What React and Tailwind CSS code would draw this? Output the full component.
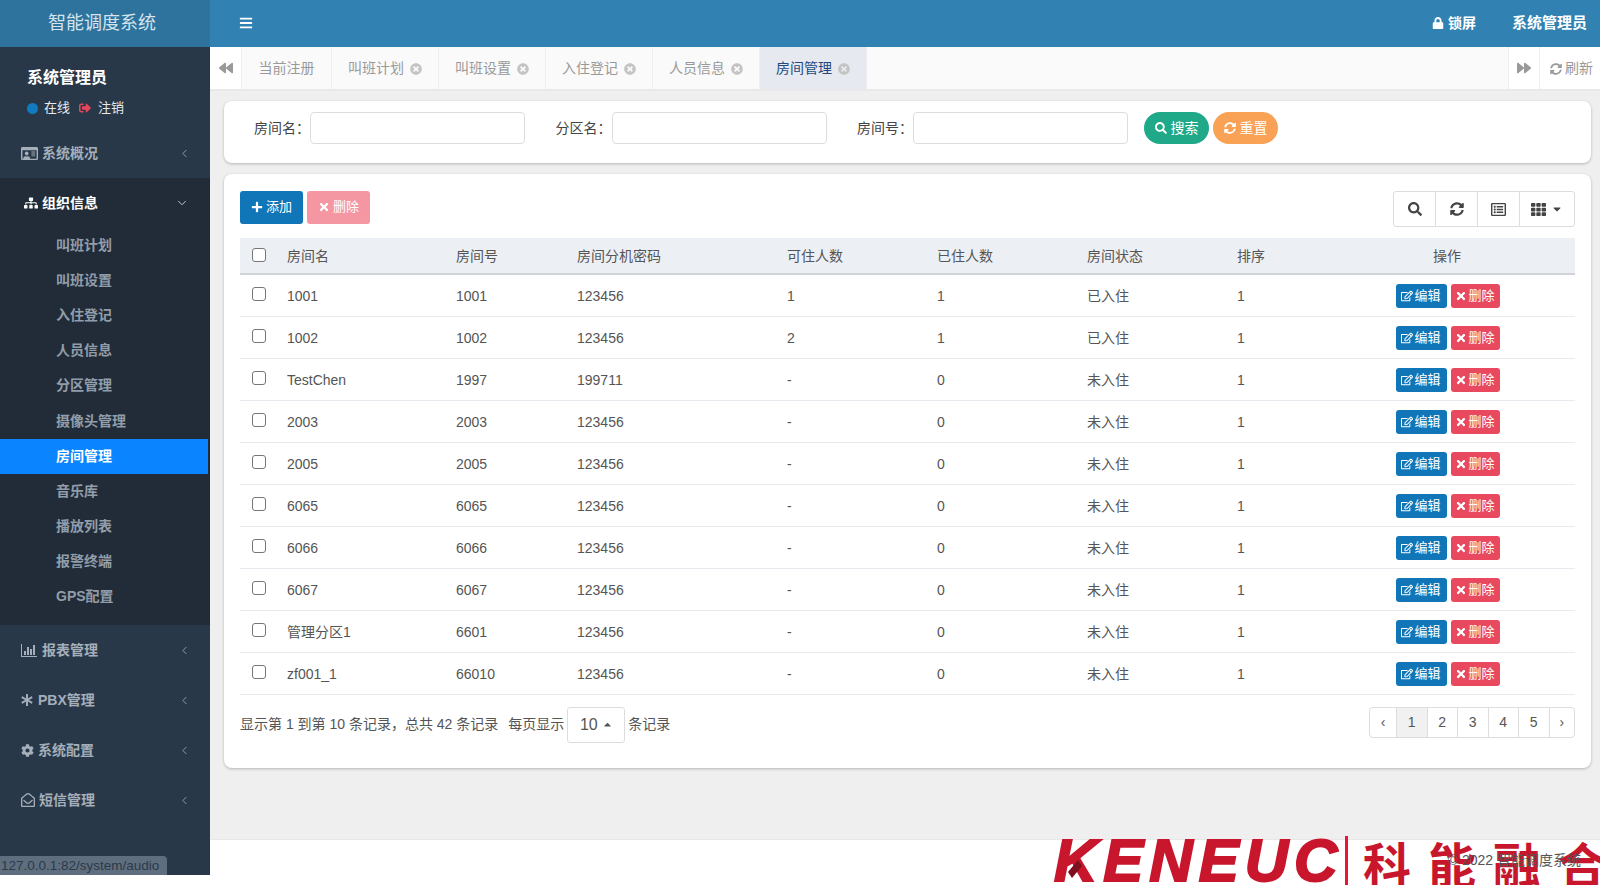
import {
  FaAsterisk,
  FaBackward,
  FaBars,
  FaCaretDown,
  FaCaretUp,
  FaCog,
  FaForward,
  FaLock,
  FaPlus,
  FaRegEdit,
  FaRegEnvelopeOpen,
  FaRegIdCard,
  FaRegListAlt,
  FaSearch,
  FaSignOutAlt,
  FaSitemap,
  FaSyncAlt,
  FaTh,
  FaTimes,
  FaTimesCircle,
} from "react-icons/fa";
import { ChevronDown, ChevronLeft } from "lucide-react";

const SUB_MENU = [
  "叫班计划",
  "叫班设置",
  "入住登记",
  "人员信息",
  "分区管理",
  "摄像头管理",
  "房间管理",
  "音乐库",
  "播放列表",
  "报警终端",
  "GPS配置",
];

const TABS = ["叫班计划", "叫班设置", "入住登记", "人员信息", "房间管理"];

const ROOMS = [
  { name: "1001", no: "1001", pwd: "123456", cap: "1", used: "1", status: "已入住" },
  { name: "1002", no: "1002", pwd: "123456", cap: "2", used: "1", status: "已入住" },
  { name: "TestChen", no: "1997", pwd: "199711", cap: "-", used: "0", status: "未入住" },
  { name: "2003", no: "2003", pwd: "123456", cap: "-", used: "0", status: "未入住" },
  { name: "2005", no: "2005", pwd: "123456", cap: "-", used: "0", status: "未入住" },
  { name: "6065", no: "6065", pwd: "123456", cap: "-", used: "0", status: "未入住" },
  { name: "6066", no: "6066", pwd: "123456", cap: "-", used: "0", status: "未入住" },
  { name: "6067", no: "6067", pwd: "123456", cap: "-", used: "0", status: "未入住" },
  { name: "管理分区1", no: "6601", pwd: "123456", cap: "-", used: "0", status: "未入住" },
  { name: "zf001_1", no: "66010", pwd: "123456", cap: "-", used: "0", status: "未入住" },
];

const ChartIcon = () => (
  <svg width="16" height="13" viewBox="0 0 16 13" fill="currentColor">
    <path d="M0 0h1v12h15v1H0z" />
    <path d="M3 7h2v4H3zM6 3h2v8H6zM9 5h2v6H9zM12 1h2v10h-2z" />
  </svg>
);

const Checkbox = () => (
  <span className="block w-[14px] h-[14px] rounded-[3px] border border-[#767676] bg-white" />
);

const MenuItem = ({ icon, label, gap = "gap-[4px]" }) => (
  <div className="h-[50px] flex items-center pl-[21px] pr-[19px] text-[14px] font-semibold text-[#a4afba]">
    <span className={`flex items-center ${gap}`}>
      {icon}
      {label}
    </span>
    <ChevronLeft size={13} strokeWidth={1.5} className="ml-auto text-[#a4afba]" />
  </div>
);

const Sidebar = () => (
  <aside className="w-[210px] h-[875px] shrink-0 bg-[#293849] flex flex-col">
    <div className="h-[47px] shrink-0 bg-[#2d739d] text-[#d5e4ee] text-[18px] flex items-center pl-[48px]">
      智能调度系统
    </div>
    <div className="h-[81px] shrink-0 pl-[27px] pt-[20px]">
      <div className="text-[16px] leading-[22px] font-bold text-white">系统管理员</div>
      <div className="mt-[9px] flex items-center text-[13px] leading-[20px] text-[#e6eaee]">
        <span className="w-[11px] h-[11px] rounded-full bg-[#127bc0]" />
        <span className="ml-[6px]">在线</span>
        <FaSignOutAlt className="ml-[9px] text-[12px] text-[#e5475c]" />
        <span className="ml-[7px]">注销</span>
      </div>
    </div>
    <MenuItem icon={<FaRegIdCard className="text-[17px]" />} label="系统概况" />
    <div className="bg-[#212c38] pb-[11px]">
      <div className="h-[50px] flex items-center pl-[24px] pr-[21px] text-[14px] font-bold text-white">
        <FaSitemap className="text-[14px] mr-[4px]" />
        组织信息
        <ChevronDown size={14} strokeWidth={1.5} className="ml-auto text-[#d4dae0]" />
      </div>
      {SUB_MENU.map((item) => (
        <div
          key={item}
          className={`h-[35.1px] w-[208px] flex items-center pl-[56px] text-[14px] font-semibold ${
            item === "房间管理" ? "bg-[#0a84ff] text-white" : "text-[#929daa]"
          }`}
        >
          {item}
        </div>
      ))}
    </div>
    <MenuItem icon={<ChartIcon />} label="报表管理" gap="gap-[5px]" />
    <MenuItem icon={<FaAsterisk className="text-[12px]" />} label="PBX管理" gap="gap-[5px]" />
    <MenuItem icon={<FaCog className="text-[13px]" />} label="系统配置" />
    <MenuItem icon={<FaRegEnvelopeOpen className="text-[14px]" />} label="短信管理" />
  </aside>
);

const TopBar = () => (
  <header className="h-[47px] shrink-0 bg-[#3182b2] flex items-center text-white pb-[1px]">
    <FaBars className="ml-[29px] text-[14px]" />
    <FaLock className="ml-auto text-[12px]" />
    <span className="ml-[4px] text-[14px] font-semibold">锁屏</span>
    <span className="ml-[36px] mr-[13px] text-[15px] font-semibold">系统管理员</span>
  </header>
);

const TabBar = () => (
  <div className="h-[44px] shrink-0 bg-[#fafafa] border-b-2 border-[#e9e9e9] flex text-[14px] text-[#999999]">
    <div className="w-[32px] bg-white border-r border-[#eeeeee] flex items-center justify-center">
      <FaBackward className="text-[14px] text-[#999999]" />
    </div>
    <div className="w-[90px] pt-[1px] border-r border-[#eeeeee] flex items-center justify-center">当前注册</div>
    {TABS.map((tab) => (
      <div
        key={tab}
        className={`w-[107px] pt-[1px] border-r border-[#eeeeee] flex items-center justify-center gap-[6px] ${
          tab === "房间管理" ? "bg-[#e6eaf0] text-[#22497f]" : ""
        }`}
      >
        {tab}
        <FaTimesCircle className="text-[12px] text-[#c4c4c4]" />
      </div>
    ))}
    <div className="ml-auto w-[32px] bg-white border-x border-[#eeeeee] flex items-center justify-center">
      <FaForward className="text-[14px] text-[#999999]" />
    </div>
    <div className="w-[60px] pt-[1px] bg-white flex items-center justify-center gap-[3px] pl-[3px]">
      <FaSyncAlt className="text-[12px]" />
      刷新
    </div>
  </div>
);

const SearchField = ({ label }) => (
  <div className="w-[301.5px] h-[32px] shrink-0 flex items-center text-[14px] text-[#444444]">
    <span className="w-[56px] shrink-0">{label}：</span>
    <input className="w-[215px] h-[32px] rounded-[4px] border border-[#dddddd] bg-white" />
  </div>
);

const SearchCard = () => (
  <section className="h-[62px] bg-white rounded-[8px] shadow-[0_1px_3px_rgba(0,0,0,0.25)] pl-[30px] pt-[11px] flex items-start">
    <SearchField label="房间名" />
    <SearchField label="分区名" />
    <div className="w-[287px] h-[32px] shrink-0 flex items-center text-[14px] text-[#444444]">
      <span className="w-[56px] shrink-0">房间号：</span>
      <input className="w-[215px] h-[32px] rounded-[4px] border border-[#dddddd] bg-white" />
    </div>
    <button className="w-[65px] h-[32px] rounded-full bg-[#1fa988] text-white text-[14px] flex items-center justify-center gap-[4px]">
      <FaSearch className="text-[12px]" />
      搜索
    </button>
    <button className="ml-[4px] w-[65px] h-[32px] rounded-full bg-[#f9a155] text-white text-[14px] flex items-center justify-center gap-[4px]">
      <FaSyncAlt className="text-[12px]" />
      重置
    </button>
  </section>
);

const Toolbar = () => (
  <div className="h-[48px] pt-[1px] flex items-start">
    <button className="w-[63px] h-[33px] pb-[1px] rounded-[3px] bg-[#1076b8] text-white text-[13px] flex items-center justify-center gap-[3px]">
      <FaPlus className="text-[12px]" />
      添加
    </button>
    <button className="ml-[4px] w-[63px] h-[33px] pb-[1px] rounded-[3px] bg-[#f597a2] text-white text-[13px] flex items-center justify-center gap-[3px]">
      <FaTimes className="text-[12px]" />
      删除
    </button>
    <div className="ml-auto w-[182px] h-[36px] flex rounded-[3px] border border-[#dddddd] text-[#444444]">
      <div className="w-[42px] border-r border-[#dddddd] flex items-center justify-center">
        <FaSearch className="text-[14px]" />
      </div>
      <div className="w-[42px] border-r border-[#dddddd] flex items-center justify-center">
        <FaSyncAlt className="text-[14px]" />
      </div>
      <div className="w-[42px] border-r border-[#dddddd] flex items-center justify-center">
        <FaRegListAlt className="text-[15px]" />
      </div>
      <div className="flex-1 flex items-center justify-center gap-[5px]">
        <FaTh className="text-[15px]" />
        <FaCaretDown className="text-[12px]" />
      </div>
    </div>
  </div>
);

const RoomTable = () => (
  <table className="w-full table-fixed border-collapse text-[14px] text-[#555555]">
    <colgroup>
      <col className="w-[39px]" />
      <col className="w-[169px]" />
      <col className="w-[121px]" />
      <col className="w-[210px]" />
      <col className="w-[150px]" />
      <col className="w-[150px]" />
      <col className="w-[150px]" />
      <col className="w-[90px]" />
      <col />
    </colgroup>
    <thead>
      <tr className="h-[36px] bg-[#ecf0f5] border-b-2 border-[#cfd2d6]">
        <th className="pl-[12px] pb-[2px] font-normal">
          <Checkbox />
        </th>
        {["房间名", "房间号", "房间分机密码", "可住人数", "已住人数", "房间状态", "排序"].map((title) => (
          <th key={title} className="px-[8px] pt-[2px] text-left font-normal">
            {title}
          </th>
        ))}
        <th className="pt-[2px] font-normal text-center">操作</th>
      </tr>
    </thead>
    <tbody>
      {ROOMS.map((room) => (
        <tr key={room.name} className="h-[42px] border-b border-[#e7eaee]">
          <td className="pl-[12px] pb-[3px]">
            <Checkbox />
          </td>
          <td className="px-[8px] pt-[2px]">{room.name}</td>
          <td className="px-[8px] pt-[2px]">{room.no}</td>
          <td className="px-[8px] pt-[2px]">{room.pwd}</td>
          <td className="px-[8px] pt-[2px]">{room.cap}</td>
          <td className="px-[8px] pt-[2px]">{room.used}</td>
          <td className="px-[8px] pt-[2px]">{room.status}</td>
          <td className="px-[8px] pt-[2px]">1</td>
          <td className="pt-[1px] pl-[1px]">
            <div className="flex justify-center gap-[4px]">
              <button className="w-[51px] h-[24px] rounded-[3px] bg-[#1076b8] text-white text-[13px] flex items-center justify-center gap-[1px]">
                <FaRegEdit className="text-[12px]" />
                编辑
              </button>
              <button className="w-[49px] h-[24px] rounded-[3px] bg-[#e9495f] text-white text-[13px] flex items-center justify-center gap-[1px]">
                <FaTimes className="text-[12px]" />
                删除
              </button>
            </div>
          </td>
        </tr>
      ))}
    </tbody>
  </table>
);

const Pagination = () => (
  <div className="ml-auto w-[206px] h-[31px] flex rounded-[4px] border border-[#dddddd] text-[14px] text-[#555555]">
    <div className="w-[27px] border-r border-[#dddddd] flex items-center justify-center">‹</div>
    {[1, 2, 3, 4, 5].map((page) => (
      <div
        key={page}
        className={`w-[30.5px] border-r border-[#dddddd] flex items-center justify-center ${
          page === 1 ? "bg-[#f1f1f1]" : ""
        }`}
      >
        {page}
      </div>
    ))}
    <div className="flex-1 flex items-center justify-center">›</div>
  </div>
);

const TableCard = () => (
  <section className="mt-[11px] h-[594px] bg-white rounded-[8px] shadow-[0_1px_3px_rgba(0,0,0,0.25)] px-[16px] pt-[16px]">
    <Toolbar />
    <RoomTable />
    <div className="mt-[12px] flex items-start text-[14px] text-[#555555]">
      <div className="flex items-center">
        <span>显示第 1 到第 10 条记录，总共 42 条记录</span>
        <span className="ml-[10px]">每页显示</span>
        <div className="ml-[3px] w-[58px] h-[36px] rounded-[3px] border border-[#dddddd] flex items-center justify-center gap-[4px] text-[16px]">
          10
          <FaCaretUp className="text-[11px]" />
        </div>
        <span className="ml-[3px]">条记录</span>
      </div>
      <Pagination />
    </div>
  </section>
);

// 页脚上盖着的公司 logo
const Logo = () => (
  <div className="absolute left-[830px] top-[-4px] w-[560px] h-[50px] overflow-hidden text-[#c8162c]">
    <span className="absolute left-[14px] top-[-7px] text-[60px] leading-[64px] font-bold italic tracking-[6px] font-['Liberation_Sans',sans-serif] [-webkit-text-stroke:2px_#c8162c]">
      KENEUC
    </span>
    <svg className="absolute left-[28px] top-[24px]" width="14" height="18" viewBox="0 0 14 18">
      <polygon points="10,0 14,6 4,18 0,12" fill="#7d0f1e" />
    </svg>
    <span className="absolute left-[305px] top-0 w-[3px] h-[50px] bg-[#f01234]" />
    <span className="absolute left-[323px] top-[3px] text-[48px] leading-[56px] font-bold tracking-[17px] whitespace-nowrap">
      科能融合
    </span>
  </div>
);

const Footer = () => (
  <footer className="relative h-[46px] shrink-0 bg-white border-t border-[#e8e8e8] flex items-center justify-end pr-[19px] pb-[4px] text-[14px] text-[#555555]">
    <Logo />
    <span className="relative">© 2022 智能调度系统</span>
  </footer>
);

export default function App() {
  return (
    <div className="relative w-[1600px] h-[885px] overflow-hidden flex bg-white font-['Liberation_Sans','Noto_Sans_CJK_SC',sans-serif]">
      <Sidebar />
      <div className="flex-1 min-w-0 flex flex-col">
        <TopBar />
        <TabBar />
        <main className="flex-1 bg-[#efefef] pl-[14px] pr-[9px] pt-[10px]">
          <SearchCard />
          <TableCard />
        </main>
        <Footer />
      </div>
      <div className="absolute left-0 top-[856px] w-[167px] h-[19px] rounded-tr-[4px] bg-[#5f6e7e] text-[13.5px] leading-[19px] text-[#2b3a4a] pl-[1px] overflow-hidden whitespace-nowrap">
        127.0.0.1:82/system/audio
      </div>
    </div>
  );
}
